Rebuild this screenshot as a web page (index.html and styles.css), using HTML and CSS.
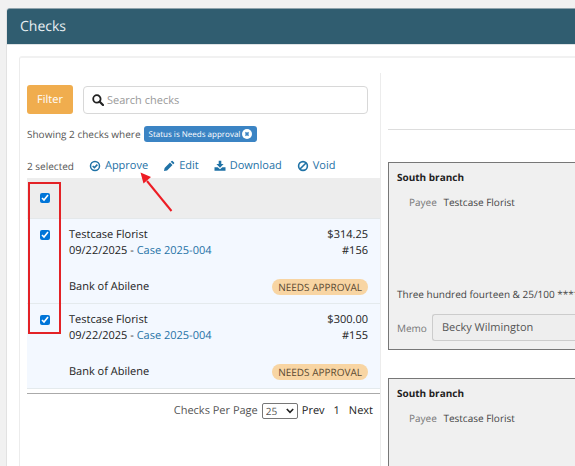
FILE: index.html
```html
<!DOCTYPE html>
<html lang="en">
<head>
    <meta charset="UTF-8">
    <meta name="viewport" content="width=device-width, initial-scale=1.0">
    <title>Checks</title>
    <link rel="stylesheet" href="styles.css">
</head>
<body>
    <main class="page-panel">
        <header class="page-header">
            <h1>Checks</h1>
        </header>

        <div class="content">
            <section class="check-list">
                <form class="search-row">
                    <button type="button" class="filter-button">Filter</button>
                    <label class="search-box" for="search">
                        <svg class="icon" viewBox="0 0 12 12" aria-hidden="true">
                            <circle cx="4.9" cy="4.9" r="3.7" fill="none" stroke="currentColor" stroke-width="1.8"/>
                            <path d="M7.7 7.7L11 11" stroke="currentColor" stroke-width="2.2" stroke-linecap="round"/>
                        </svg>
                        <input type="text" id="search" placeholder="Search checks" aria-label="Search checks">
                    </label>
                </form>

                <div class="filter-summary">
                    <span>Showing 2 checks where</span>
                    <button type="button" class="filter-tag">
                        Status is Needs approval
                        <svg viewBox="0 0 10 10" aria-hidden="true">
                            <circle cx="5" cy="5" r="5" fill="#fff"/>
                            <path d="M3.4 3.4L6.6 6.6M6.6 3.4L3.4 6.6" stroke="#3b84c4" stroke-width="1.5"/>
                        </svg>
                    </button>
                </div>

                <div class="actions">
                    <span class="selected-count">2 selected</span>
                    <a href="#approve">
                        <svg class="icon" viewBox="0 0 12 12" aria-hidden="true">
                            <circle cx="6" cy="6" r="4.5" fill="none" stroke="currentColor" stroke-width="1.5"/>
                            <path d="M3.7 6L5.4 7.6L8.4 4.6" fill="none" stroke="currentColor" stroke-width="1.6"/>
                        </svg>
                        Approve
                    </a>
                    <a href="#edit">
                        <svg class="icon" viewBox="0 0 12 12" aria-hidden="true">
                            <path d="M1 11L1.6 7.9L7 2.5L9.5 5L4.1 10.4ZM7.7 1.8L8.6 0.9Q9.1 0.5 9.6 0.9L11.1 2.4Q11.5 2.9 11.1 3.4L10.2 4.3Z" fill="currentColor"/>
                        </svg>
                        Edit
                    </a>
                    <a href="#download">
                        <svg class="icon" viewBox="0 0 12 12" aria-hidden="true">
                            <path d="M4.7 0.8H7.3V4H9.6L6 7.7L2.4 4H4.7ZM0.5 7.3H3.7L6 9.3L8.3 7.3H11.5V10.8H0.5Z" fill="currentColor"/>
                        </svg>
                        Download
                    </a>
                    <a href="#void">
                        <svg class="icon" viewBox="0 0 12 12" aria-hidden="true">
                            <circle cx="6" cy="6" r="4.4" fill="none" stroke="currentColor" stroke-width="1.6"/>
                            <path d="M3 9L9 3" stroke="currentColor" stroke-width="1.6"/>
                        </svg>
                        Void
                    </a>
                    <svg class="arrow" viewBox="0 0 34 42" aria-hidden="true">
                        <path d="M31.500 39L7 9" stroke="#ed1c24" stroke-width="2"/>
                        <path d="M0.500 0.500L11 5L3.500 11.500Z" fill="#ed1c24"/>
                    </svg>
                </div>

                <div class="table-wrap">
                    <table class="check-table">
                        <thead>
                            <tr>
                                <th class="select-cell"><input type="checkbox" aria-label="Select all checks" checked></th>
                                <th colspan="2"></th>
                            </tr>
                        </thead>
                        <tbody>
                            <tr>
                                <td class="select-cell"><input type="checkbox" aria-label="Select check 156" checked></td>
                                <td>
                                    <div>Testcase Florist</div>
                                    <div>09/22/2025 - <a href="#case">Case 2025-004</a></div>
                                    <div class="bank">Bank of Abilene</div>
                                </td>
                                <td class="amount-cell">
                                    <div>$314.25</div>
                                    <div>#156</div>
                                    <span class="status">NEEDS APPROVAL</span>
                                </td>
                            </tr>
                            <tr>
                                <td class="select-cell"><input type="checkbox" aria-label="Select check 155" checked></td>
                                <td>
                                    <div>Testcase Florist</div>
                                    <div>09/22/2025 - <a href="#case">Case 2025-004</a></div>
                                    <div class="bank">Bank of Abilene</div>
                                </td>
                                <td class="amount-cell">
                                    <div>$300.00</div>
                                    <div>#155</div>
                                    <span class="status">NEEDS APPROVAL</span>
                                </td>
                            </tr>
                        </tbody>
                    </table>
                    <div class="highlight"></div>
                </div>

                <nav class="pagination">
                    <label for="perPage">Checks Per Page</label>
                    <span class="select-wrap">
                        <select id="perPage">
                            <option>25</option>
                            <option>50</option>
                            <option>100</option>
                        </select>
                        <svg viewBox="0 0 8 6" aria-hidden="true">
                            <path d="M0.800 1L4 4.300L7.200 1" fill="none" stroke="#222" stroke-width="1.600"/>
                        </svg>
                    </span>
                    <a href="#prev">Prev</a>
                    <a href="#1" class="page-number">1</a>
                    <a href="#next">Next</a>
                </nav>
            </section>

            <section class="previews">
                <div class="preview-toolbar"></div>
                <article class="check-card">
                    <h2>South branch</h2>
                    <div class="payee"><span>Payee</span> Testcase Florist</div>
                    <div class="written-amount">Three hundred fourteen &amp; 25/100 *****</div>
                    <div class="memo">
                        <label for="memo">Memo</label>
                        <input type="text" id="memo" value="Becky Wilmington">
                    </div>
                </article>
                <article class="check-card">
                    <h2>South branch</h2>
                    <div class="payee"><span>Payee</span> Testcase Florist</div>
                </article>
            </section>
        </div>
    </main>
</body>
</html>
```
FILE: styles.css
```css
* {
    margin: 0;
    padding: 0;
    box-sizing: border-box;
}

body {
    display: flex;
    flex-direction: column;
    min-height: 100vh;
    padding: 8px 0 0 6px;
    background: #f1f1f1;
    color: #222;
    font-family: 'Open Sans', 'Noto Sans', sans-serif;
    font-size: 11px;
    line-height: 16px;
    text-rendering: geometricPrecision;
}

input,
select,
button {
    font-family: inherit;
    text-rendering: inherit;
}

a {
    color: #1f72a6;
    text-decoration: none;
}

.icon {
    width: 12px;
    height: 12px;
    flex: none;
}

.page-panel {
    flex: 1;
    display: flex;
    flex-direction: column;
    background: #fff;
    border-left: 1px solid #e2e2e2;
    border-top-left-radius: 3px;
}

.page-header {
    height: 37px;
    padding: 0 13px;
    display: flex;
    align-items: center;
    background: #305d70;
    border-top: 1px solid #8fa3ac;
    border-bottom: 1px solid #dfe3e5;
    border-top-left-radius: 3px;
}

.page-header h1 {
    color: #e9eff2;
    font-size: 14px;
    font-weight: 400;
}

.content {
    flex: 1;
    display: grid;
    grid-template-columns: 354px 1fr;
    gap: 7px;
    margin: 11px 0 0 12px;
    padding: 15px 0 0 7px;
    border-top: 2px solid #f1f1f1;
    border-left: 1px solid #ececec;
    border-top-left-radius: 3px;
}

.check-list {
    padding-top: 12px;
    border-right: 1px solid #ececec;
}

.search-row {
    display: flex;
    gap: 10px;
    padding-right: 12px;
}

.filter-button {
    width: 46px;
    height: 29px;
    border: none;
    border-radius: 3px;
    background: #f0ad4e;
    color: #fff;
    font-size: 11px;
    cursor: pointer;
}

.search-box {
    flex: 1;
    display: flex;
    align-items: center;
    gap: 3px;
    height: 28px;
    margin-top: 1px;
    padding: 0 8px;
    border: 1px solid #d8d8d8;
    border-radius: 4px;
}

.search-box input {
    flex: 1;
    min-width: 0;
    border: none;
    outline: none;
    font-size: 11px;
}

.search-box input::placeholder {
    color: #999;
}

.filter-summary {
    display: flex;
    align-items: center;
    gap: 3px;
    margin-top: 12px;
    color: #555;
    font-size: 10px;
}

.filter-tag {
    display: flex;
    align-items: center;
    gap: 2px;
    height: 16px;
    padding: 0 5px;
    border: none;
    border-radius: 3px;
    background: #3b84c4;
    color: #fff;
    font-size: 8px;
}

.filter-tag svg {
    width: 10px;
    height: 10px;
}

.actions {
    position: relative;
    display: flex;
    align-items: center;
    gap: 15px;
    height: 24px;
    margin-top: 12px;
}

.actions a {
    display: flex;
    align-items: center;
    gap: 4px;
}

.selected-count {
    color: #555;
    font-size: 10px;
}

.arrow {
    position: absolute;
    top: 18px;
    left: 113px;
    z-index: 1;
    width: 34px;
    height: 42px;
}

.table-wrap {
    position: relative;
    padding-bottom: 4px;
    border-bottom: 1px solid #aaa;
}

.check-table {
    width: 100%;
    border-collapse: collapse;
}

.check-table th {
    height: 40px;
    background: #ededed;
    border-bottom: 1px solid #e4e8ea;
}

.check-table td {
    height: 84px;
    padding: 8px 0;
    background: #f3f8ff;
    border-bottom: 1px solid #e4eaed;
    vertical-align: top;
}

.check-table .select-cell {
    width: 42px;
    padding-right: 6px;
    text-align: center;
}

.check-table input {
    width: 10px;
    height: 10px;
    vertical-align: middle;
    accent-color: #0075d8;
}

.bank {
    margin-top: 20px;
}

.check-table .amount-cell {
    padding-right: 12px;
    text-align: right;
}

.status {
    display: inline-block;
    margin-top: 20px;
    padding: 0 6px;
    border-radius: 8px;
    background: #f8d5a3;
    color: #5b4a32;
    font-size: 10px;
    vertical-align: top;
}

.highlight {
    position: absolute;
    top: 4px;
    left: 1px;
    width: 33px;
    height: 152px;
    border: 2px solid #e32226;
}

.pagination {
    display: flex;
    align-items: center;
    justify-content: flex-end;
    gap: 4px;
    margin-top: 9px;
    padding-right: 7px;
    color: #555;
}

.pagination a {
    color: #222;
}

.pagination .page-number {
    margin: 0 5px;
}

.select-wrap {
    position: relative;
    display: flex;
}

.select-wrap select {
    appearance: none;
    width: 36px;
    height: 16px;
    padding-left: 3px;
    border: 1px solid #777;
    border-radius: 2px;
    background: #fff;
    color: #555;
    font-size: 10px;
}

.select-wrap svg {
    position: absolute;
    top: 5px;
    right: 4px;
    width: 8px;
    height: 6px;
    pointer-events: none;
}

.previews {
    display: flex;
    flex-direction: column;
    min-width: 0;
    color: #444;
    font-size: 10px;
}

.preview-toolbar {
    height: 57px;
    margin-bottom: 32px;
    border-bottom: 1px solid #ddd;
}

.check-card {
    padding: 6px 0 8px 8px;
    border: 1px solid #777;
    border-right: none;
    background: #f0f0f0;
    overflow: hidden;
    white-space: nowrap;
}

.check-card + .check-card {
    flex: 1;
    margin-top: 28px;
    border-bottom: none;
}

.check-card h2 {
    color: #222;
    font-size: 10px;
    font-weight: 700;
    line-height: 16px;
}

.payee {
    margin: 9px 0 0 12px;
}

.payee span,
.memo label {
    color: #777;
}

.payee span {
    margin-right: 4px;
}

.written-amount {
    margin-top: 76px;
}

.memo {
    display: flex;
    align-items: center;
    gap: 5px;
    margin-top: 12px;
}

.memo input {
    flex: 1;
    min-width: 0;
    height: 27px;
    padding-left: 9px;
    border: 1px solid #ccc;
    border-right: none;
    border-radius: 3px 0 0 3px;
    background: #eee;
    color: #555;
    font-size: 11px;
}
```
